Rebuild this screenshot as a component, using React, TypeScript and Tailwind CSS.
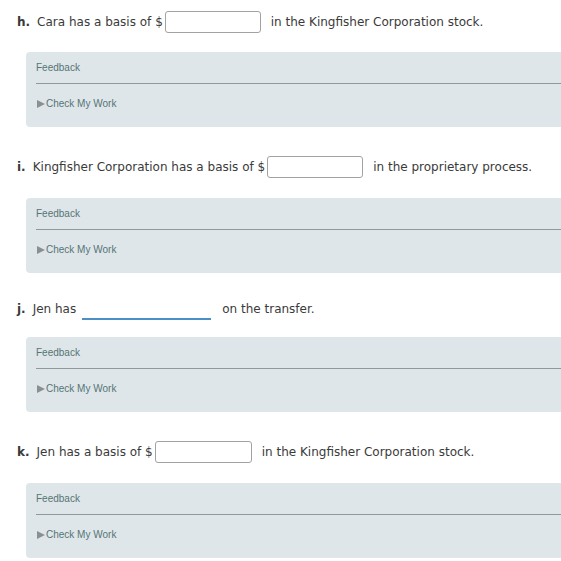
const text = "font-['DejaVu_Sans',Verdana,sans-serif] text-[12px] text-[#3a3a3a]";

function Feedback() {
  return (
    <div className="h-[75px] ml-[26px] rounded-l-[4px] bg-[#dfe6e9] pl-[10px] pt-[9px] font-['Liberation_Sans',Arial,sans-serif] text-[10px] text-[#557575]">
      <div className="h-[13px] leading-[13px]">Feedback</div>
      <div className="mt-[9px] h-px bg-[#8f989c]" />
      <div className="mt-[13px] flex items-center leading-[13px]">
        <span className="mr-[1px] ml-[1px] inline-block h-0 w-0 border-y-[4px] border-l-[8px] border-y-transparent border-l-[#8a8f92]" />
        <span>Check My Work</span>
      </div>
    </div>
  );
}

function Box({ w }: { w: number }) {
  return (
    <span
      className="inline-block h-[22px] rounded-[3px] border border-[#a2a2a2] bg-white"
      style={{ width: w }}
    />
  );
}

export default function App() {
  return (
    <div className={`w-[561px] h-[561px] overflow-hidden bg-white ${text}`}>
      <div className="mt-[11px] flex h-[22px] items-center pl-[17px]">
        <b className="mr-[7px]">h.</b>
        <span className="mr-[2px]">Cara has a basis of $</span>
        <Box w={96} />
        <span className="ml-[10px]">in the Kingfisher Corporation stock.</span>
      </div>
      <div className="mt-[19px]">
        <Feedback />
      </div>

      <div className="mt-[29px] flex h-[22px] items-center pl-[17px]">
        <b className="mr-[7px]">i.</b>
        <span className="mr-[2px]">Kingfisher Corporation has a basis of $</span>
        <Box w={96} />
        <span className="ml-[10px]">in the proprietary process.</span>
      </div>
      <div className="mt-[20px]">
        <Feedback />
      </div>

      <div className="mt-[25px] flex h-[22px] items-center pl-[17px]">
        <b className="mr-[7px]">j.</b>
        <span>Jen has</span>
        <span className="ml-[6px] mt-[20px] inline-block h-[2px] w-[129px] bg-[#4a8fc6]" />
        <span className="ml-[11px]">on the transfer.</span>
      </div>
      <div className="mt-[17px]">
        <Feedback />
      </div>

      <div className="mt-[29px] flex h-[22px] items-center pl-[17px]">
        <b className="mr-[7px]">k.</b>
        <span className="mr-[2px]">Jen has a basis of $</span>
        <Box w={97} />
        <span className="ml-[10px]">in the Kingfisher Corporation stock.</span>
      </div>
      <div className="mt-[20px]">
        <Feedback />
      </div>
    </div>
  );
}
